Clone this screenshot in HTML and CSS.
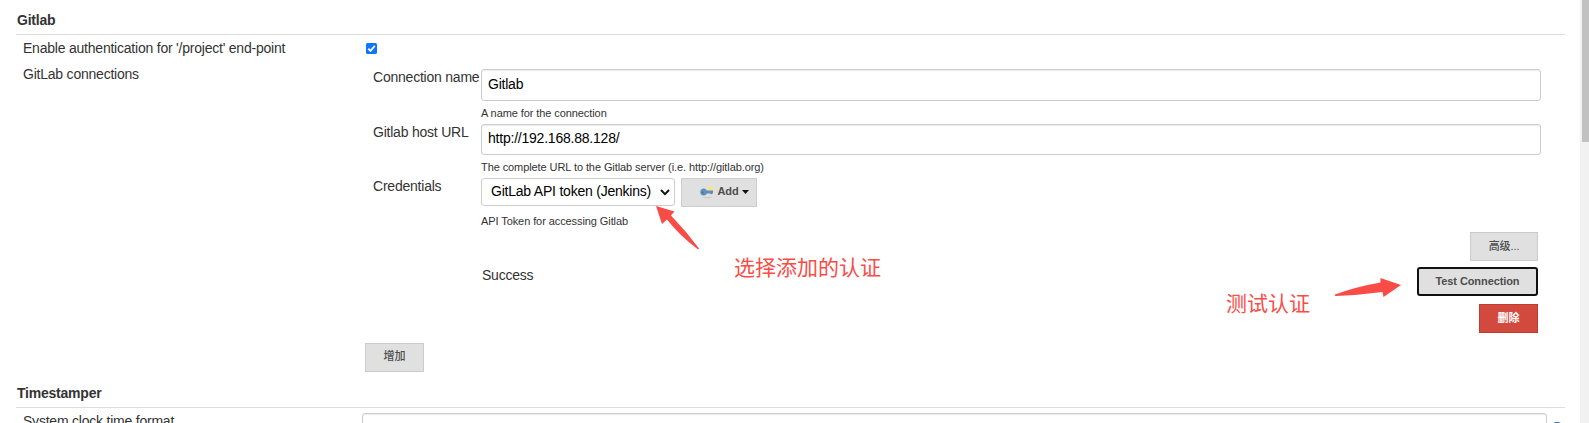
FILE: index.html
```html
<!DOCTYPE html>
<html lang="zh-CN">
<head>
<meta charset="utf-8">
<title>Jenkins</title>
<link rel="stylesheet" href="styles.css">
</head>
<body>
<div class="page">
  <main class="config">
    <h2 class="section-title"><span>Gitlab</span></h2>
    <div class="row row-auth">
      <div class="label"><span>Enable authentication for '/project' end-point</span></div>
      <div class="check"><svg width="11" height="11" viewBox="0 0 11 11"><rect width="11" height="11" rx="1.5" fill="#0d75ff"/><path d="M2.3 5.7 4.4 7.9 8.8 2.9" fill="none" stroke="#fff" stroke-width="1.7"/></svg></div>
    </div>
    <div class="row row-conn">
      <div class="label"><span>GitLab connections</span></div>
      <div class="conn">
        <div class="field"><div class="name"><span>Connection name</span></div><div class="control"><div class="input">Gitlab</div><div class="help"><span>A name for the connection</span></div></div></div>
        <div class="field field-url"><div class="name"><span>Gitlab host URL</span></div><div class="control"><div class="input">http://192.168.88.128/</div><div class="help"><span>The complete URL to the Gitlab server (i.e. http://gitlab.org)</span></div></div></div>
        <div class="field field-cred"><div class="name"><span>Credentials</span></div><div class="control">
          <div class="cred"><div class="select"><span>GitLab API token (Jenkins)</span><svg width="10" height="7" viewBox="0 0 10 7"><path d="M1 1 5 5.1 9 1" fill="none" stroke="#111" stroke-width="2"/></svg></div>
          <div class="button add"><svg class="key" width="14" height="14" viewBox="0 0 14 14"><ellipse cx="7" cy="12.5" rx="5" ry=".8" fill="#ccc"/><circle cx="10.4" cy="3.5" r="2.4" fill="#f5e77b"/><path d="M5 5.400h8v3h-1v.8h-1.500v-.8H5z" fill="#5f8cb8"/><ellipse cx="3.600" cy="7" rx="3.300" ry="3.500" fill="#628fbe"/><circle cx="2.600" cy="7.400" r="1" fill="#42719f"/></svg><span>Add</span><svg width="7" height="4" viewBox="0 0 7 4"><path d="M0 0h7L3.500 4z" fill="#111"/></svg></div></div>
          <div class="help"><span>API Token for accessing Gitlab</span></div></div></div>
        <div class="actions">
          <div class="button advanced">高级...</div>
          <div class="test"><span class="success">Success</span><div class="button focus">Test Connection</div></div>
          <div class="button danger">删除</div>
        </div>
      </div>
    </div>
    <div class="row row-more"><div></div><div class="button more">增加</div></div>
    <h2 class="section-title second"><span>Timestamper</span></h2>
    <div class="row row-time">
      <div class="label"><span>System clock time format</span></div>
      <div class="time-control"><div class="input"></div><svg width="16" height="16" viewBox="0 0 16 16"><circle cx="8" cy="8" r="8" fill="#3569ac"/></svg></div>
    </div>
  </main>
  <aside class="scrollbar"><div class="thumb"></div></aside>
  <div class="note note-select">选择添加的认证</div>
  <div class="note note-test">测试认证</div>
  <svg class="arrows" width="1589" height="423" viewBox="0 0 1589 423" fill="#f94c46"><path d="M656 206 674.5 211.5 671 215.5Q686 231 699 248.5Q698.500 249.500 697.500 249Q680 236 667 219.500L662 224Z"/><path d="M1401 285 1380.500 278 1380.500 282.500Q1357 286.500 1335 294.500Q1334.500 296 1336 296Q1360 295 1382.500 292L1383.500 297Z"/></svg>
</div>
</body>
</html>
```
FILE: styles.css
```css
body { margin: 0; background: #fff; color: #333; font: 14px/18px "Liberation Sans", Arial, "Noto Sans CJK SC", sans-serif; letter-spacing: -.22px; }
* { box-sizing: border-box; }
.page { position: relative; display: flex; width: 1589px; height: 423px; overflow: hidden; }
.config { width: 1549px; margin-left: 16px; flex: none; }
.section-title { display: flex; align-items: flex-start; height: 35px; margin: 0; padding: 11px 0 0 1px; border-bottom: 1px solid #ddd; font-size: 14px; line-height: 18px; }
.second { height: 36px; padding-top: 12px; }
.row { display: grid; grid-template-columns: 342px 1fr; padding-left: 7px; }
.row-auth { height: 30px; padding-top: 4px; }
.check { padding: 4px 0 0 1px; }
.check svg { display: block; }
.row-conn { height: 278px; }
.conn { width: 1176px; padding-top: 4px; }
.field { display: grid; grid-template-columns: 109px 1060px; height: 55px; padding-left: 7px; }
.name { padding-left: 1px; margin-top: -1px; white-space: nowrap; }
.input { height: 32px; padding: 5px 6px; border: 1px solid #ccc; border-radius: 3px; color: #000; box-shadow: inset 0 1px 1px rgba(0,0,0,.08); }
.help { height: 23px; padding-top: 3px; font-size: 11px; letter-spacing: -.085px; white-space: nowrap; }
.field-url { height: 54px; }
.field-url .input { height: 31px; padding-top: 4px; }
.cred { display: flex; gap: 6px; height: 29px; }
.select { display: flex; align-items: center; justify-content: space-between; width: 194px; height: 28px; padding: 0 4px 2px 9px; border: 1px solid #ccc; border-radius: 3px; color: #000; white-space: nowrap; }
.select svg { margin-top: 2px; }
.button { display: flex; align-items: center; justify-content: center; flex: none; height: 29px; background: #e0e0e0; border: 1px solid #ccc; font-size: 11px; font-weight: bold; color: #4d4d4d; padding-bottom: 2px; letter-spacing: -.09px; white-space: nowrap; }
.add { width: 76px; padding-left: 11px; gap: 3px; }
.add span { margin-top: -1px; }
.field-cred { height: 54px; }
.field-cred .help { padding-top: 5px; }
.actions { display: flex; flex-direction: column; align-items: flex-end; padding: 0 3px 0 117px; width: 1176px; }
.advanced { width: 68px; font-weight: 500; }
.test { display: flex; justify-content: space-between; width: 100%; margin: 6px 0 8px; }
.success { height: 18px; margin-top: -1px; }
.focus { width: 121px; border: 2px solid #111; border-radius: 3px; }
.danger { width: 59px; background: #d2493e; border-color: #c23a2f; color: #fff; }
.row-more { height: 29px; }
.more { width: 59px; padding-bottom: 3px; font-weight: 500; }
.row-time { padding-top: 3px; }
.time-control { display: flex; padding-top: 2px; margin-left: -3px; gap: 2px; }
.row-time .label { padding-top: 1px; }
.time-control .input { width: 1185px; flex: none; }
.time-control svg { margin-top: 9px; }
.scrollbar { width: 9px; margin-left: 15px; padding-left: 2px; background: #f1f1f1; }
.thumb { height: 142px; background: #c1c1c1; }
.note { position: absolute; color: #f94c46; font: 400 21px/28px "Noto Sans CJK SC", sans-serif; letter-spacing: 0; white-space: nowrap; }
.note-select { left: 734px; top: 252px; }
.note-test { left: 1226px; top: 288px; }
.arrows { position: absolute; left: 0; top: 0; }
```
